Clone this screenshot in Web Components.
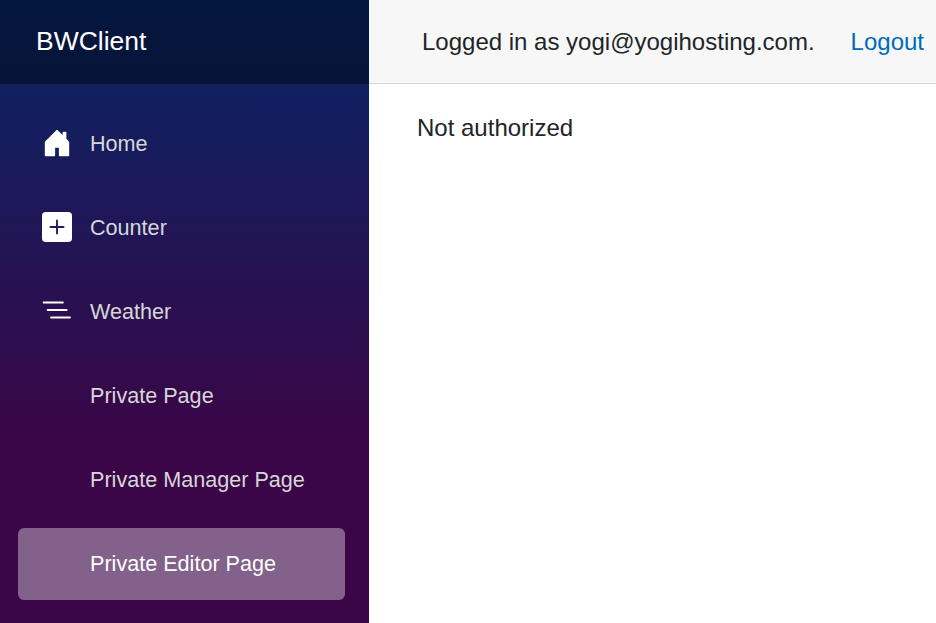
<!DOCTYPE html>
<html><head><meta charset="utf-8">
<style>
html,body{margin:0;padding:0;height:100%;overflow:hidden}
body{font-family:"Liberation Sans",Arial,sans-serif;font-size:24px;color:#212529}
</style></head>
<body>
<template id="t-app">
<style>
:host{display:flex;width:936px;height:623px;overflow:hidden}
.side{width:369px;flex:none;display:flex;flex-direction:column;background:linear-gradient(180deg,rgb(5,39,103) 0%,#3a0647 70%)}
.main{flex:1;min-width:0;display:flex;flex-direction:column;background:#fff}
</style>
<div class="side"><slot name="side"></slot></div>
<div class="main"><slot></slot></div>
</template>

<template id="t-brand">
<style>
:host{display:flex;align-items:center;height:84px;padding:0 0 2px 36px;box-sizing:border-box;background:rgba(0,0,0,.4);color:#fff;font-size:26.5px;flex:none}
</style><slot></slot>
</template>

<template id="t-nav">
<style>
:host{display:flex;flex-direction:column;gap:12px;padding:24px 24px 0 18px}
</style><slot></slot>
</template>

<template id="t-link">
<style>
:host{display:flex;align-items:center;height:72px;border-radius:6px;color:#d7d7d7;font-size:21.6px}
:host([active]){background:rgba(255,255,255,.37);color:#fff}
.ic{width:30px;height:30px;margin:-2px 18px 0 24px;flex:none;display:flex;align-items:center;justify-content:center}
.tx{margin-top:-1px}
::slotted(svg){display:block}
</style>
<span class="ic"><slot name="icon"></slot></span><span class="tx"><slot></slot></span>
</template>

<template id="t-top">
<style>
:host{display:flex;align-items:center;justify-content:flex-end;height:83px;border-bottom:1px solid #d6d5d5;background:#f7f7f7;padding-right:12px;flex:none;font-size:24px;color:#212529}
a{color:#006bb7;text-decoration:none;margin-left:36px}
</style>
<span>Logged in as yogi@yogihosting.com.</span><a href="#">Logout</a>
</template>

<template id="t-content">
<style>
:host{display:block;padding:30px 0 0 48px;font-size:24px;line-height:28px;color:#212529}
</style><slot></slot>
</template>

<bw-app>
  <bw-brand slot="side">BWClient</bw-brand>
  <bw-nav slot="side">
    <bw-link>
      <svg slot="icon" width="30" height="30" viewBox="0 0 16 16" fill="#fff"><path d="M8.354 1.146a.5.5 0 0 0-.708 0l-6 6A.5.5 0 0 0 1.5 7.5v7a.5.5 0 0 0 .5.5h4.5a.5.5 0 0 0 .5-.5v-4h2v4a.5.5 0 0 0 .5.5H14a.5.5 0 0 0 .5-.5v-7a.5.5 0 0 0-.146-.354L13 5.793V2.5a.5.5 0 0 0-.5-.5h-1a.5.5 0 0 0-.5.5v1.293L8.354 1.146z"/></svg>
      Home</bw-link>
    <bw-link>
      <svg slot="icon" width="30" height="30" viewBox="0 0 16 16"><path fill="#fff" d="M2 0a2 2 0 0 0-2 2v12a2 2 0 0 0 2 2h12a2 2 0 0 0 2-2V2a2 2 0 0 0-2-2H2z"/><path fill="#2a1760" d="M8 4a.5.5 0 0 1 .5.5v3h3a.5.5 0 0 1 0 1h-3v3a.5.5 0 0 1-1 0v-3h-3a.5.5 0 0 1 0-1h3v-3A.5.5 0 0 1 8 4z"/></svg>
      Counter</bw-link>
    <bw-link>
      <svg slot="icon" width="30" height="30" viewBox="0 0 30 30" fill="none" stroke="#fff" stroke-width="1.8" stroke-linecap="round"><path d="M1.600 6.500h19.300M5.600 14h19.100M9 21.500h19"/></svg>
      Weather</bw-link>
    <bw-link>Private Page</bw-link>
    <bw-link>Private Manager Page</bw-link>
    <bw-link active>Private Editor Page</bw-link>
  </bw-nav>
  <bw-top></bw-top>
  <bw-content>Not authorized</bw-content>
</bw-app>
<script>
for (const [tag,id] of [['bw-app','t-app'],['bw-brand','t-brand'],['bw-nav','t-nav'],['bw-link','t-link'],['bw-top','t-top'],['bw-content','t-content']]) {
  customElements.define(tag, class extends HTMLElement {
    constructor(){super();this.attachShadow({mode:'open'}).appendChild(document.getElementById(id).content.cloneNode(true));}
  });
}
</script>
</body></html>
